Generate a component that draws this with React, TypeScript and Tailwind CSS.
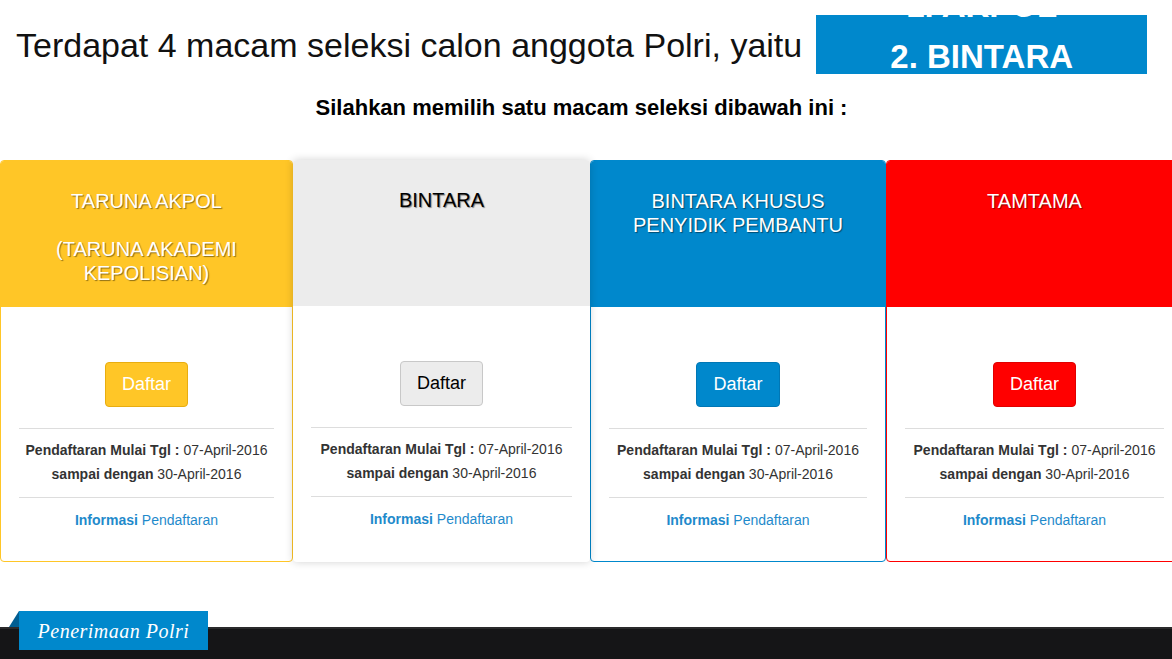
import React from "react";

interface Seleksi {
  id: string;
  title: React.ReactNode;
  header: string;
  headerText: string;
  body: string;
  button: string;
}

const seleksiList: Seleksi[] = [
  {
    id: "akpol",
    title: (
      <>
        TARUNA AKPOL
        <br />
        <br />
        (TARUNA AKADEMI KEPOLISIAN)
      </>
    ),
    header: "bg-[#ffc627]",
    headerText: "text-white",
    body: "w-[293px] border border-[#ffc627]",
    button: "bg-[#ffc627] border-[#e8ad10] text-white",
  },
  {
    id: "bintara",
    title: "BINTARA",
    header: "bg-[#ececec]",
    headerText: "text-black",
    body: "w-[297px] z-10 shadow-[0_0_8px_rgba(0,0,0,0.18)]",
    button: "bg-[#ececec] border-[#c8c8c8] text-black",
  },
  {
    id: "bakomsus",
    title: "BINTARA KHUSUS PENYIDIK PEMBANTU",
    header: "bg-[#0088cc]",
    headerText: "text-white",
    body: "w-[296px] border border-[#0088cc]",
    button: "bg-[#0088cc] border-[#0077b5] text-white",
  },
  {
    id: "tamtama",
    title: "TAMTAMA",
    header: "bg-[#ff0000]",
    headerText: "text-white",
    body: "w-[297px] border border-[#ff0000]",
    button: "bg-[#ff0000] border-[#e00000] text-white",
  },
];

const SeleksiCard: React.FC<{ item: Seleksi }> = ({ item }) => (
  <div className={`relative shrink-0 bg-white rounded-[4px] overflow-hidden flex flex-col ${item.body}`}>
    <div
      className={`h-[146px] px-[20px] pt-[28px] text-center text-[20px] leading-[24px] [text-shadow:1px_1px_1px_rgba(0,0,0,0.45)] ${item.header} ${item.headerText}`}
    >
      {item.title}
    </div>
    <div className="px-[18px] pt-[55px] pb-[29px] flex flex-col items-center">
      <button
        className={`h-[45px] px-[16px] rounded-[4px] border text-[18px] ${item.button}`}
      >
        Daftar
      </button>
      <div className="mt-[21px] w-full border-t border-[#dddddd] pt-[9px] pb-[11px] text-center text-[14px] leading-[24px] text-[#333333]">
        <div>
          <span className="font-bold">Pendaftaran Mulai Tgl :</span> 07-April-2016
        </div>
        <div>
          <span className="font-bold">sampai dengan</span> 30-April-2016
        </div>
      </div>
      <div className="w-full border-t border-[#dddddd] pt-[10px] text-center text-[14px] leading-[24px] text-[#1f8acb]">
        <span className="font-bold">Informasi</span> Pendaftaran
      </div>
    </div>
  </div>
);

export default function App() {
  return (
    <div className="w-[1172px] h-[659px] overflow-hidden bg-white font-['Liberation_Sans',Arial,sans-serif] flex flex-col">
      <div className="flex items-center pl-[16px] pt-[15px] gap-[14px]">
        <h1 className="text-[34px] leading-[40px] text-[#111111] whitespace-nowrap">
          Terdapat 4 macam seleksi calon anggota Polri, yaitu
        </h1>
        <div className="w-[331px] h-[59px] shrink-0 bg-[#0088cc] overflow-hidden text-white font-bold text-[33px] text-center">
          <div className="-mt-[35px] flex flex-col">
            <div className="h-[51px] leading-[51px]">1. AKPOL</div>
            <div className="h-[51px] leading-[51px]">2. BINTARA</div>
          </div>
        </div>
      </div>

      <p className="mt-[20px] pr-[9px] text-center text-[22px] leading-[28px] font-bold text-black">
        Silahkan memilih satu macam seleksi dibawah ini :
      </p>

      <div className="mt-[38px] flex">
        {seleksiList.map((item) => (
          <SeleksiCard key={item.id} item={item} />
        ))}
      </div>

      <div className="relative mt-[65px] h-[40px] shrink-0 bg-[#151517] border-t-2 border-[#2a2a2c]">
        <div className="absolute left-[9px] -top-[18px] w-[10px] h-[16px] bg-[#005e92] [clip-path:polygon(100%_0,100%_100%,0_100%)]" />
        <div className="absolute left-[19px] -top-[18px] w-[189px] h-[39px] bg-[#0088cc] flex items-center justify-center text-white italic text-[20px] font-['Liberation_Serif',serif] tracking-[0.5px]">
          Penerimaan Polri
        </div>
      </div>
    </div>
  );
}
